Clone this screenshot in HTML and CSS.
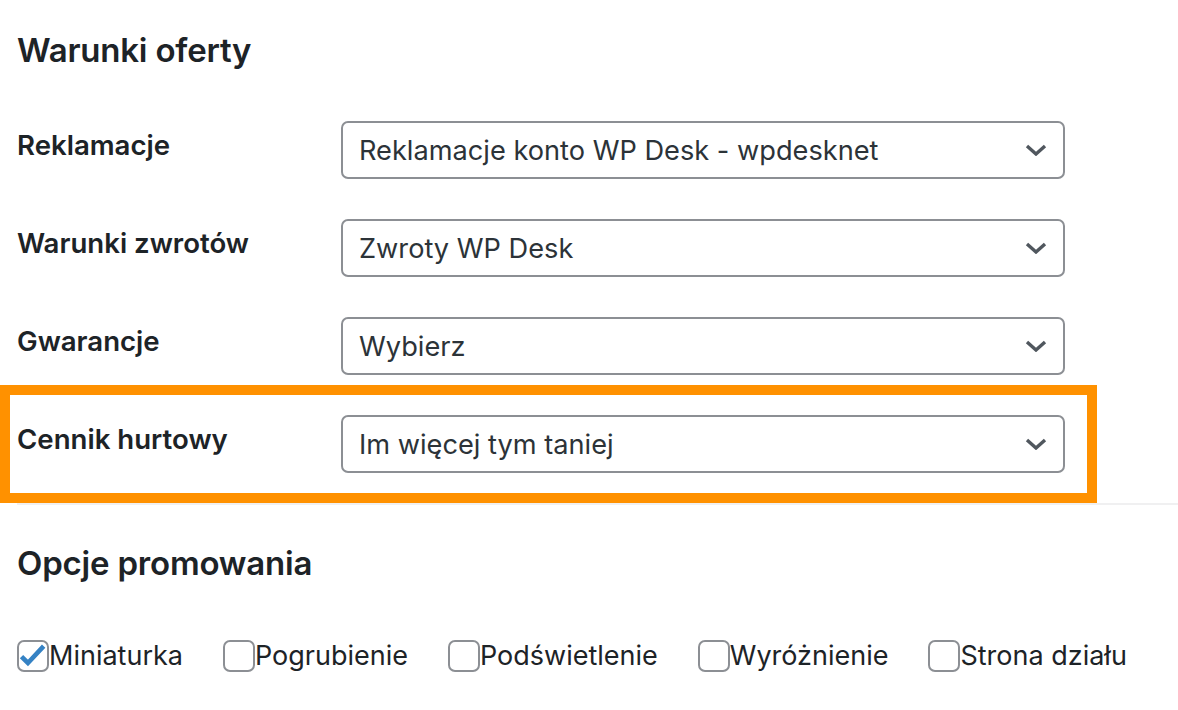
FILE: index.html
```html
<!DOCTYPE html>
<html lang="pl">
<head>
    <meta charset="UTF-8">
    <title>Warunki oferty</title>
    <link rel="stylesheet" href="styles.css">
</head>
<body>
    <div class="wrap">
        <h2 class="section-title">Warunki oferty</h2>

        <div class="form-table">
            <div class="row">
                <label class="row-label">Reklamacje</label>
                <div class="select">
                    <span>Reklamacje konto WP Desk - wpdesknet</span>
                    <svg class="chevron" viewBox="0 0 22 12"><path d="M2 2l9 8 9-8"/></svg>
                </div>
            </div>
            <div class="row">
                <label class="row-label">Warunki zwrotów</label>
                <div class="select">
                    <span>Zwroty WP Desk</span>
                    <svg class="chevron" viewBox="0 0 22 12"><path d="M2 2l9 8 9-8"/></svg>
                </div>
            </div>
            <div class="row">
                <label class="row-label">Gwarancje</label>
                <div class="select">
                    <span>Wybierz</span>
                    <svg class="chevron" viewBox="0 0 22 12"><path d="M2 2l9 8 9-8"/></svg>
                </div>
            </div>
            <div class="row highlight">
                <label class="row-label">Cennik hurtowy</label>
                <div class="select">
                    <span>Im więcej tym taniej</span>
                    <svg class="chevron" viewBox="0 0 22 12"><path d="M2 2l9 8 9-8"/></svg>
                </div>
            </div>
        </div>

        <div class="divider"></div>

        <h2 class="section-title second">Opcje promowania</h2>

        <div class="options">
            <label class="option">
                <span class="checkbox checked">
                    <svg viewBox="0 0 24 24"><path d="M3 12.5l5.5 5.5L22 3.5"/></svg>
                </span>Miniaturka
            </label>
            <label class="option"><span class="checkbox"></span>Pogrubienie</label>
            <label class="option"><span class="checkbox"></span>Podświetlenie</label>
            <label class="option"><span class="checkbox"></span>Wyróżnienie</label>
            <label class="option"><span class="checkbox"></span>Strona działu</label>
        </div>
    </div>
</body>
</html>
```

FILE: styles.css
```css
body {
    margin: 0;
    background: #fff;
    color: #1d2327;
    font-family: Inter, "Noto Sans", sans-serif;
}

.wrap {
    padding: 28px 0 0 17px;
}

.section-title {
    margin: 0;
    font-size: 33px;
    font-weight: 600;
    line-height: 44px;
    letter-spacing: -0.2px;
}

.form-table {
    margin-top: 29px;
}

.row {
    display: grid;
    grid-template-columns: 324px 724px;
    padding: 20px 0;
    height: 58px;
}

.row.highlight {
    margin-left: -7px;
    padding-left: 7px;
    width: 1070px;
    outline: 10px solid #ff9100;
}

.row-label {
    padding-top: 4px;
    font-size: 27.6px;
    font-weight: 600;
    line-height: 40px;
}

.select {
    display: flex;
    align-items: center;
    justify-content: space-between;
    box-sizing: border-box;
    height: 58px;
    padding: 0 16px 0 16px;
    border: 2px solid #8c8f94;
    border-radius: 7px;
    font-size: 27.2px;
    color: #2c3338;
}

.chevron {
    width: 22px;
    height: 12px;
    fill: none;
    stroke: #50575e;
    stroke-width: 3.4;
}

.divider {
    margin-top: 10px;
    height: 2px;
    background: #f0f0f1;
}

.section-title.second {
    margin-top: 36px;
}

.options {
    display: flex;
    gap: 40px;
    margin-top: 54px;
}

.option {
    display: flex;
    align-items: center;
    font-size: 27px;
    color: #1d2327;
}

.checkbox {
    display: inline-flex;
    align-items: center;
    box-sizing: border-box;
    width: 32px;
    height: 32px;
    border: 2px solid #8c8f94;
    border-radius: 7px;
}

.checkbox svg {
    width: 28px;
    height: 28px;
    margin-left: -1px;
    fill: none;
    stroke: #3582c4;
    stroke-width: 4;
}
```
